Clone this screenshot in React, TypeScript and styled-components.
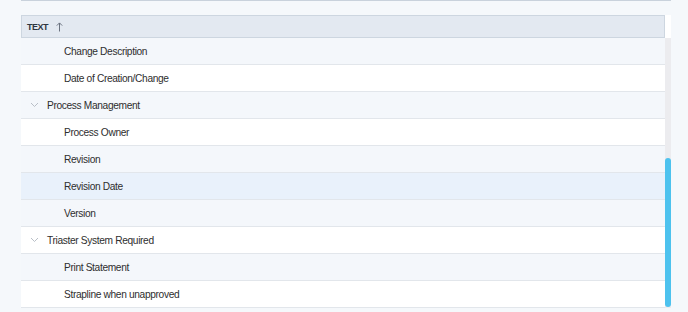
import React from "react";
import styled, { createGlobalStyle } from "styled-components";

const Global = createGlobalStyle`
  html, body { margin: 0; padding: 0; background: #f5f8fb; }
  body { font-family: "Liberation Sans", Arial, sans-serif; width: 688px; height: 312px; overflow: hidden; }
`;

const Page = styled.div`
  padding-left: 21px;
  width: 650px;
`;

const TopRule = styled.div`
  height: 1px;
  background: #c9d2dc;
  margin-bottom: 14px;
`;

const Frame = styled.div`
  display: flex;
  align-items: stretch;
`;

const Table = styled.div`
  width: 644px;
  display: flex;
  flex-direction: column;
`;

const Header = styled.div`
  height: 21px;
  background: #e3e9f1;
  border: 1px solid #cdd6e0;
  display: flex;
  align-items: center;
  padding-left: 5px;
  gap: 8px;
  box-sizing: content-box;
  width: 637px;
`;

const HeaderLabel = styled.span`
  font-size: 9px;
  font-weight: 700;
  color: #2f3640;
  letter-spacing: -0.5px;
`;

const Row = styled.div<{ $bg: string }>`
  height: 26px;
  border-bottom: 1px solid #e2e6eb;
  background: ${(p) => p.$bg};
  display: flex;
  align-items: center;
`;

const Chevron = styled.span`
  width: 26px;
  display: flex;
  justify-content: center;
`;

const Label = styled.span<{ $indent: number }>`
  font-size: 10.2px;
  letter-spacing: -0.35px;
  color: #2e2e2e;
  margin-left: ${(p) => p.$indent}px;
`;

const Track = styled.div`
  width: 6px;
  display: flex;
  flex-direction: column;
`;

const TrackTop = styled.div`
  height: 23px;
  background: #ffffff;
`;

const TrackBody = styled.div`
  flex: 1;
  background: #ececef;
  display: flex;
  flex-direction: column;
`;

const Thumb = styled.div`
  margin-top: 120px;
  height: 149px;
  background: #4dc2ee;
  border-radius: 3px;
`;

type Item = { text: string; group?: boolean };

const items: Item[] = [
  { text: "Change Description" },
  { text: "Date of Creation/Change" },
  { text: "Process Management", group: true },
  { text: "Process Owner" },
  { text: "Revision" },
  { text: "Revision Date" },
  { text: "Version" },
  { text: "Triaster System Required", group: true },
  { text: "Print Statement" },
  { text: "Strapline when unapproved" },
];

const ChevronIcon = () => (
  <svg width="9" height="6" viewBox="0 0 9 6">
    <path d="M1 1 L4.5 4.5 L8 1" fill="none" stroke="#b9bfc7" strokeWidth="1" />
  </svg>
);

const ArrowUp = () => (
  <svg width="7" height="10" viewBox="0 0 7 10">
    <path d="M3.5 9.5 V1 M0.8 3.6 L3.5 0.9 L6.2 3.6" fill="none" stroke="#6b7380" strokeWidth="1" />
  </svg>
);

export default function App() {
  return (
    <>
      <Global />
      <Page>
        <TopRule />
        <Frame>
          <Table>
            <Header>
              <HeaderLabel>TEXT</HeaderLabel>
              <ArrowUp />
            </Header>
            {items.map((it, i) => {
              const bg = i === 5 ? "#e9f1fb" : i % 2 === 0 ? "#f4f7fb" : "#ffffff";
              return (
                <Row key={it.text} $bg={bg}>
                  {it.group ? (
                    <>
                      <Chevron>
                        <ChevronIcon />
                      </Chevron>
                      <Label $indent={0}>{it.text}</Label>
                    </>
                  ) : (
                    <Label $indent={43}>{it.text}</Label>
                  )}
                </Row>
              );
            })}
          </Table>
          <Track>
            <TrackTop />
            <TrackBody>
              <Thumb />
            </TrackBody>
          </Track>
        </Frame>
      </Page>
    </>
  );
}
